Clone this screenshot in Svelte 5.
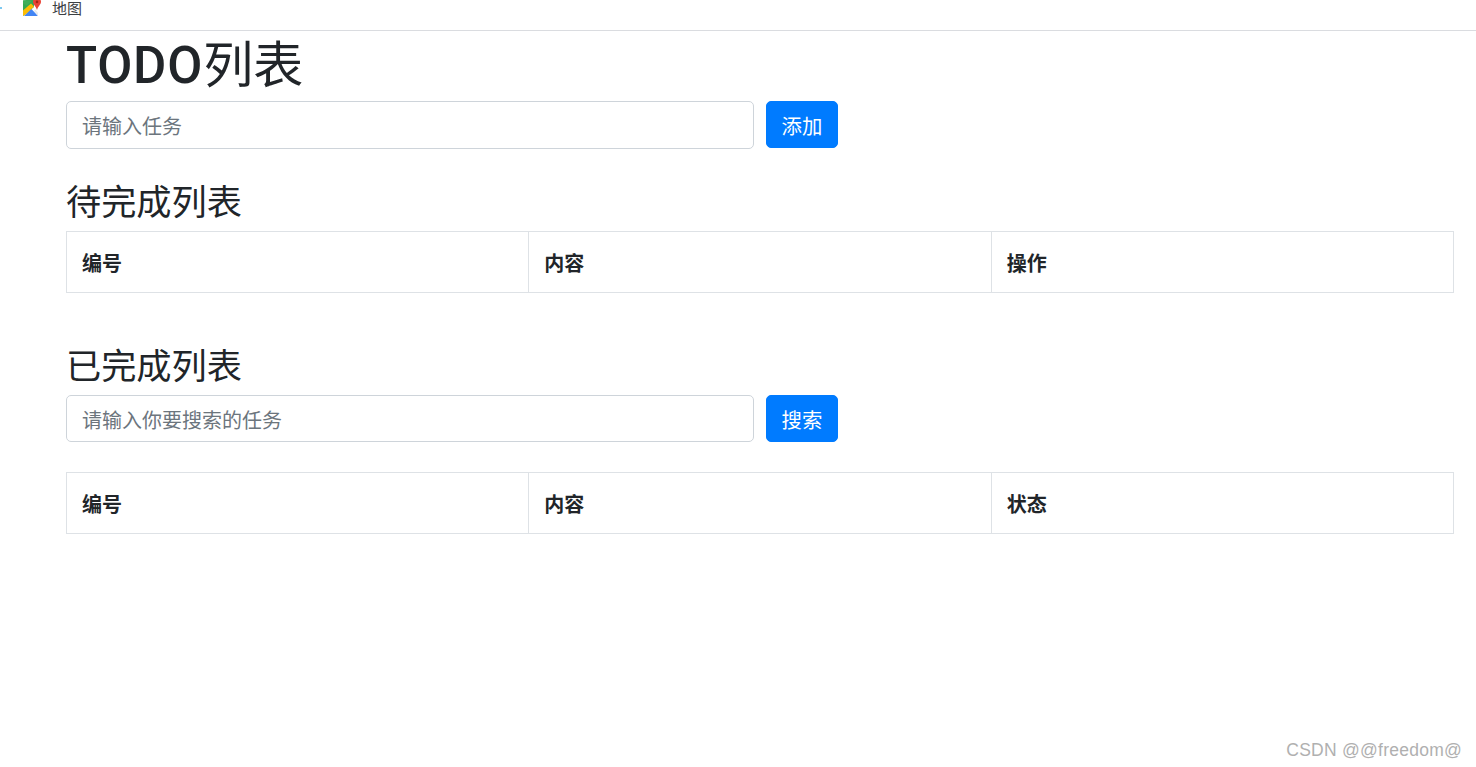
<script>
  const pending = ['编号', '内容', '操作'];
  const done = ['编号', '内容', '状态'];
</script>

<div class="bookmarks">
  <span class="tick"></span>
  <svg class="mapicon" viewBox="0 0 18 18" width="18" height="18" aria-hidden="true">
    <path d="M0 1.5 L11 0 L11 8 L0 17 Z" fill="#34a853" />
    <path d="M1 17 L8 9.5 L15 17 Z" fill="#4285f4" />
    <path d="M0 11.5 L8 4.5 L11 7.5 L2.5 15.5 L0 17 Z" fill="#fbbc04" />
    <path d="M15 17 L11 12 L12.5 10.5 L15 14 Z" fill="#e8eaed" />
    <path d="M0 1.5 H9 L4 6.5 L0 4.5 Z" fill="#3fae5a" />
    <path d="M14 -1 C11.5 -1 10 0.8 10 2.8 C10 5.4 13 7.6 14 11 C15 7.6 18 5.4 18 2.8 C18 0.8 16.5 -1 14 -1 Z" fill="#ea4335" />
    <circle cx="14" cy="2.9" r="1.3" fill="#a52714" />
  </svg>
  <span class="bm-label">地图</span>
</div>

<main class="container">
  <h1><span class="latin">TODO</span>列表</h1>
  <div class="form">
    <input type="text" placeholder="请输入任务" />
    <button type="button">添加</button>
  </div>

  <h2 class="first">待完成列表</h2>
  <table>
    <thead>
      <tr>{#each pending as c}<th>{c}</th>{/each}</tr>
    </thead>
  </table>

  <h2 class="second">已完成列表</h2>
  <div class="form search">
    <input type="text" placeholder="请输入你要搜索的任务" />
    <button type="button">搜索</button>
  </div>
  <table class="done">
    <thead>
      <tr>{#each done as c}<th>{c}</th>{/each}</tr>
    </thead>
  </table>
</main>

<div class="watermark">CSDN @@freedom@</div>

<style>
  :global(body) {
    margin: 0;
    background: #fff;
    color: #212529;
    font-family: "Liberation Sans", "Noto Sans CJK SC", sans-serif;
    overflow: hidden;
  }
  .bookmarks {
    height: 30px;
    border-bottom: 1px solid #dadce0;
    display: flex;
    align-items: flex-start;
    position: relative;
    overflow: hidden;
  }
  .tick {
    position: absolute;
    left: 0;
    top: 7px;
    width: 2px;
    height: 2px;
    background: #7cc8f0;
  }
  .mapicon {
    margin-left: 23px;
    margin-top: -1px;
    overflow: visible;
  }
  .bm-label {
    margin-left: 11px;
    font-size: 15px;
    line-height: 17px;
    color: #3c4043;
  }
  .container {
    margin-left: 66px;
    width: 1388px;
  }
  h1 {
    box-sizing: border-box;
    height: 70px;
    margin: 0;
    font-family: "Noto Sans CJK SC", sans-serif;
    font-size: 50px;
    font-weight: 400;
    line-height: 60px;
  }
  .latin {
    font-family: Roboto, sans-serif;
    font-size: 51px;
    font-weight: 500;
    letter-spacing: 0.8px;
  }
  h2 {
    margin: 0;
    font-size: 35.2px;
    font-weight: 400;
    line-height: 42px;
  }
  h2.first {
    margin-top: 33px;
    margin-bottom: 7px;
  }
  h2.second {
    margin-top: 53px;
    margin-bottom: 7px;
  }
  .form {
    display: flex;
    align-items: flex-start;
    gap: 12px;
  }
  input {
    box-sizing: border-box;
    width: 688px;
    height: 48px;
    padding: 4px 16px 0 15px;
    border: 1px solid #ced4da;
    border-radius: 5px;
    font: inherit;
    font-size: 20px;
    color: #495057;
    outline: none;
  }
  .search input {
    height: 47px;
    padding-top: 6px;
  }
  input::placeholder {
    color: #6c757d;
    opacity: 1;
  }
  button {
    box-sizing: border-box;
    width: 72px;
    height: 47px;
    border: 1px solid #007bff;
    border-radius: 5px;
    background: #007bff;
    color: #fff;
    font: inherit;
    font-size: 20.4px;
    padding: 1px 0 0;
  }
  .search button {
    padding-top: 0;
  }
  table {
    box-sizing: border-box;
    width: 1388px;
    table-layout: fixed;
    border-collapse: collapse;
  }
  table.done {
    margin-top: 30px;
  }
  th {
    box-sizing: border-box;
    height: 61px;
    padding: 0 16px 0 15px;
    border: 1px solid #dee2e6;
    font-size: 20px;
    font-weight: 700;
    text-align: left;
    color: #212529;
  }
  .watermark {
    position: absolute;
    right: 14px;
    top: 740px;
    font-size: 17.5px;
    line-height: 21px;
    letter-spacing: 0.25px;
    color: #b0b0b0;
  }
</style>
